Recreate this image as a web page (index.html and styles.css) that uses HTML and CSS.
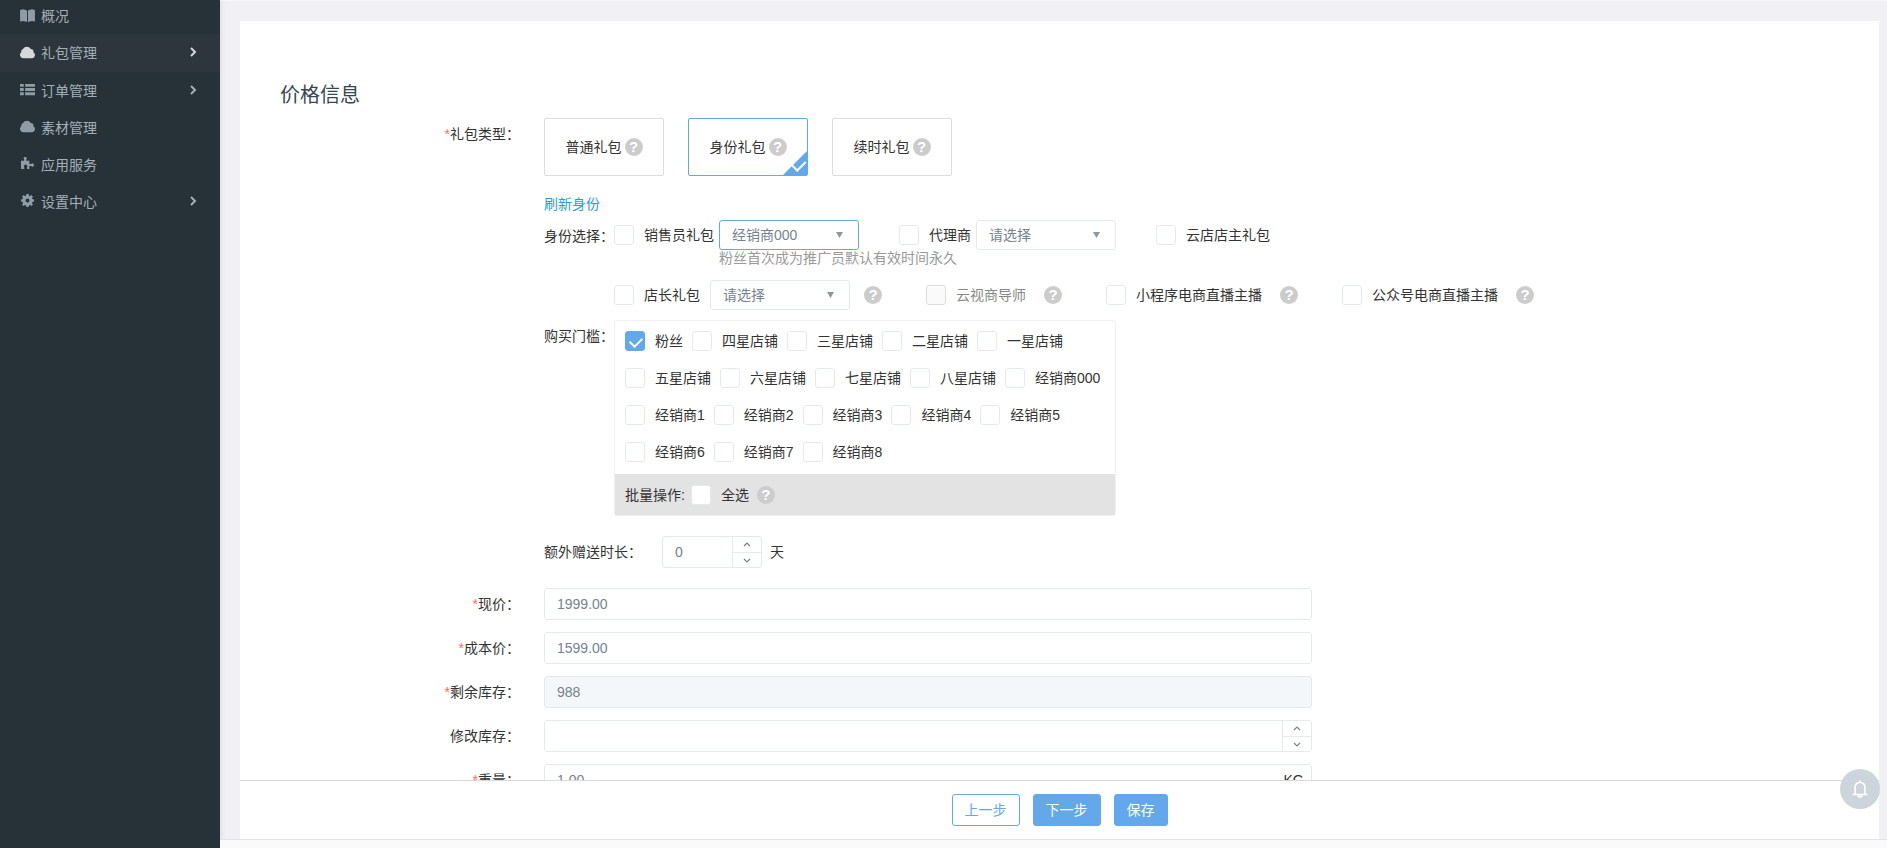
FILE: index.html
```
<!DOCTYPE html>
<html lang="zh-CN">
<head>
<meta charset="utf-8">
<title>价格信息</title>
<link rel="stylesheet" href="styles.css">
</head>
<body>
<svg class="sprite" aria-hidden="true">
  <symbol id="book" viewBox="0 0 16 14"><path d="M0 1 3.500.2 7.500 1.600V14L3.500 13 0 13.500zM16 1 12.500.2 8.500 1.600V14l4-1 3.500.5z"/></symbol>
  <symbol id="cloud" viewBox="0 0 16 12"><path d="M3.500 12A3.500 3.500 0 0 1 1.300 5.800 3.400 3.400 0 0 1 3.200 2.200 5 5 0 0 1 11.500 2.200 3.300 3.300 0 0 1 14.400 5.900 3.300 3.300 0 0 1 13 12z"/></symbol>
  <symbol id="list" viewBox="0 0 16 12"><path d="M0 0h4v3H0zM5.500 0H16v3H5.500zM0 4.500h4v3H0zM5.500 4.500H16v3H5.500zM0 9h4v3H0zM5.500 9H16v3H5.500z"/></symbol>
  <symbol id="puzzle" viewBox="0 0 16 14"><path d="M1 4h3.300V2.400a1.600 1.600 0 1 1 2.400 0V4H10v3.500h2a1.700 1.700 0 1 1 0 2.300h-2V13H7.500v-2a1.800 1.800 0 1 0-3 0v2H1z"/></symbol>
  <symbol id="cog" viewBox="0 0 14 14"><path fill-rule="evenodd" d="M5.800 0h2.400l.4 1.900 1 .4L11.200 1.200l1.700 1.700-1.100 1.600.4 1 1.800.4v2.300l-1.800.4-.4 1 1.100 1.600-1.700 1.700-1.600-1.100-1 .4L8.200 14H5.800l-.4-1.800-1-.4-1.600 1.100-1.700-1.700 1.100-1.600-.4-1L0 8.200V5.900l1.800-.4.4-1L1.100 2.900l1.700-1.700 1.600 1.100 1-.4zM7 4.900a2.100 2.100 0 1 0 0 4.200 2.100 2.100 0 0 0 0-4.200z"/></symbol>
  <symbol id="chevron" viewBox="0 0 7 10"><path class="line bold" d="m1 1 4 4-4 4"/></symbol>
  <symbol id="up" viewBox="0 0 8 5"><path class="line" d="M1 4 4 1l3 3"/></symbol>
  <symbol id="down" viewBox="0 0 8 5"><path class="line" d="m1 1 3 3 3-3"/></symbol>
  <symbol id="caret" viewBox="0 0 7 6"><path d="M0 0h7L3.500 6z"/></symbol>
  <symbol id="bell" viewBox="0 0 18 18"><path class="line bell-line" d="M1.500 14.500h15M4 14.500V8c0-4 1.800-5.500 5-5.500s5 1.500 5 5.500v6.500"/><path d="M8 .5h2v2H8zM6 15.500h6c-.4 3-5.600 3-6 0z"/></symbol>
</svg>

<aside class="sidebar">
  <nav class="menu">
    <a class="menu-item" href="#"><svg class="menu-icon"><use href="#book"/></svg>概况</a>
    <a class="menu-item active" href="#"><svg class="menu-icon"><use href="#cloud"/></svg>礼包管理<svg class="arrow"><use href="#chevron"/></svg></a>
    <a class="menu-item" href="#"><svg class="menu-icon"><use href="#list"/></svg>订单管理<svg class="arrow"><use href="#chevron"/></svg></a>
    <a class="menu-item" href="#"><svg class="menu-icon"><use href="#cloud"/></svg>素材管理</a>
    <a class="menu-item" href="#"><svg class="menu-icon"><use href="#puzzle"/></svg>应用服务</a>
    <a class="menu-item" href="#"><svg class="menu-icon"><use href="#cog"/></svg>设置中心<svg class="arrow"><use href="#chevron"/></svg></a>
  </nav>
</aside>

<div class="page">
  <main class="content">
    <form class="panel">
      <h2 class="title">价格信息</h2>

      <div class="row">
        <span class="label top-label"><i>*</i>礼包类型：</span>
        <div class="stack">
          <div class="cards">
            <button type="button" class="card">普通礼包<span class="help">?</span></button>
            <button type="button" class="card selected">身份礼包<span class="help">?</span></button>
            <button type="button" class="card">续时礼包<span class="help">?</span></button>
          </div>
          <a class="refresh" href="#">刷新身份</a>

          <div class="group">
            <span class="group-label">身份选择：</span>
            <div class="identities">
              <div class="identity-line first">
                <div class="identity"><label class="check"><input type="checkbox">销售员礼包</label>
                  <div class="select focus"><select aria-label="销售员礼包"><option>经销商000</option></select><svg><use href="#caret"/></svg><p class="hint">粉丝首次成为推广员默认有效时间永久</p></div></div>
                <div class="identity"><label class="check"><input type="checkbox">代理商</label>
                  <div class="select"><select aria-label="代理商"><option>请选择</option></select><svg><use href="#caret"/></svg></div></div>
                <div class="identity"><label class="check"><input type="checkbox">云店店主礼包</label></div>
              </div>
              <div class="identity-line second">
                <div class="identity with-select"><label class="check"><input type="checkbox">店长礼包</label>
                  <div class="select"><select aria-label="店长礼包"><option>请选择</option></select><svg><use href="#caret"/></svg></div><span class="help">?</span></div>
                <div class="identity"><label class="check disabled"><input type="checkbox" disabled>云视商导师</label><span class="help">?</span></div>
                <div class="identity"><label class="check"><input type="checkbox">小程序电商直播主播</label><span class="help">?</span></div>
                <div class="identity"><label class="check"><input type="checkbox">公众号电商直播主播</label><span class="help">?</span></div>
              </div>
            </div>
          </div>

          <div class="group">
            <span class="group-label">购买门槛：</span>
            <div class="threshold">
              <div class="levels">
                <label class="check"><input type="checkbox" checked>粉丝</label>
                <label class="check"><input type="checkbox">四星店铺</label>
                <label class="check"><input type="checkbox">三星店铺</label>
                <label class="check"><input type="checkbox">二星店铺</label>
                <label class="check"><input type="checkbox">一星店铺</label>
                <label class="check"><input type="checkbox">五星店铺</label>
                <label class="check"><input type="checkbox">六星店铺</label>
                <label class="check"><input type="checkbox">七星店铺</label>
                <label class="check"><input type="checkbox">八星店铺</label>
                <label class="check"><input type="checkbox">经销商000</label>
                <label class="check"><input type="checkbox">经销商1</label>
                <label class="check"><input type="checkbox">经销商2</label>
                <label class="check"><input type="checkbox">经销商3</label>
                <label class="check"><input type="checkbox">经销商4</label>
                <label class="check"><input type="checkbox">经销商5</label>
                <label class="check"><input type="checkbox">经销商6</label>
                <label class="check"><input type="checkbox">经销商7</label>
                <label class="check"><input type="checkbox">经销商8</label>
              </div>
              <div class="batch"><span>批量操作:</span><label class="check"><input type="checkbox">全选</label><span class="help">?</span></div>
            </div>
          </div>

          <div class="duration">
            <label for="days">额外赠送时长：</label>
            <div class="field small">
              <input id="days" type="text" value="0">
              <div class="steps"><button type="button" aria-label="增加"><svg><use href="#up"/></svg></button><button type="button" aria-label="减少"><svg><use href="#down"/></svg></button></div>
            </div>
            <span>天</span>
          </div>
        </div>
      </div>

      <div class="row"><label class="label" for="price"><i>*</i>现价：</label><div class="field"><input id="price" type="text" value="1999.00"></div></div>
      <div class="row"><label class="label" for="cost"><i>*</i>成本价：</label><div class="field"><input id="cost" type="text" value="1599.00"></div></div>
      <div class="row"><label class="label" for="stock"><i>*</i>剩余库存：</label><div class="field off"><input id="stock" type="text" value="988" disabled></div></div>
      <div class="row"><label class="label" for="change">修改库存：</label><div class="field">
        <input id="change" type="text">
        <div class="steps"><button type="button" aria-label="增加"><svg><use href="#up"/></svg></button><button type="button" aria-label="减少"><svg><use href="#down"/></svg></button></div>
      </div></div>
      <div class="row"><label class="label" for="weight"><i>*</i>重量：</label><div class="field"><input id="weight" type="text" value="1.00"><span class="unit">KG</span></div></div>
    </form>
    <div class="actions">
      <button type="button" class="btn plain">上一步</button>
      <button type="button" class="btn">下一步</button>
      <button type="button" class="btn">保存</button>
    </div>
  </main>
  <footer class="footer"></footer>
</div>
<button type="button" class="bell" aria-label="通知"><svg><use href="#bell"/></svg></button>
</body>
</html>
```

FILE: styles.css
```
* { box-sizing: border-box; }

body {
  display: flex;
  height: 100vh;
  margin: 0;
  overflow: hidden;
  background: #f0f0f5;
  color: #333;
  font: 14px/20px "Liberation Sans", "Noto Sans CJK SC", sans-serif;
}

button, input, select { font: inherit; color: inherit; }
button { cursor: pointer; }
svg { fill: currentColor; }
.sprite { display: none; }
.line { fill: none; stroke: currentColor; stroke-width: 1.2; }
.line.bold { stroke-width: 2; }
.bell-line { stroke-width: 1.6; }

/* Sidebar */
.sidebar {
  flex: 0 0 220px;
  background: #273238;
  box-shadow: 0 0 6px rgba(0, 0, 0, .12);
}
.menu-item {
  display: flex;
  align-items: center;
  height: 37px;
  padding: 0 23px 0 20px;
  color: #a3afb7;
  text-decoration: none;
}
.menu-item:first-child { height: 34px; padding-bottom: 2px; }
.menu-item.active { height: 38px; background: #2c363c; }
.menu-icon { width: 15px; height: 13px; margin: 0 6px 2px 0; color: #8f9ca4; }
.active .menu-icon, .active .arrow { color: #d5d9db; }
.arrow { width: 7px; height: 10px; margin: 0 0 2px auto; }

/* Page */
.page {
  display: flex;
  flex: 1;
  flex-direction: column;
  min-width: 0;
  border-top: 1px solid #f8f8f8;
}
.content {
  display: flex;
  flex: 1;
  flex-direction: column;
  min-height: 0;
  padding: 20px 8px 0 20px;
}
.panel {
  flex: 1;
  min-height: 0;
  padding-top: 61px;
  overflow: hidden;
  background: #fff;
}
.title {
  margin: 0 0 10px 40px;
  color: #37474f;
  font-size: 20px;
  font-weight: 400;
  line-height: 26px;
}
.row {
  display: grid;
  grid-template-columns: 280px minmax(0, 1fr);
  column-gap: 24px;
  margin-bottom: 12px;
}
.label { line-height: 32px; text-align: right; }
.label i { color: #f56c6c; font-style: normal; }

.cards { display: flex; gap: 24px; margin-bottom: 18px; }
.card {
  position: relative;
  display: flex;
  align-items: center;
  justify-content: center;
  gap: 3px;
  width: 120px;
  height: 58px;
  padding: 0;
  border: 1px solid #ddd;
  border-radius: 2px;
  background: #fff;
}
.card.selected { border-color: #62a8ea; }
.card.selected::before {
  position: absolute;
  right: 0;
  bottom: 0;
  border: 12px solid #62a8ea;
  border-top-color: transparent;
  border-left-color: transparent;
  content: "";
}
.card.selected::after {
  position: absolute;
  right: 4px;
  bottom: 4px;
  width: 6px;
  height: 11px;
  border: solid #fff;
  border-width: 0 2px 2px 0;
  transform: rotate(45deg);
  content: "";
}
.help {
  flex: none;
  width: 18px;
  height: 18px;
  border-radius: 50%;
  background: #ccc;
  color: #fff;
  font-size: 15px;
  font-weight: 700;
  line-height: 18px;
  text-align: center;
}
.refresh {
  display: block;
  width: max-content;
  margin-bottom: 6px;
  color: #1ba0e1;
  text-decoration: none;
}

/* Identity and threshold */
.group { display: flex; }
.group-label { flex: 0 0 70px; line-height: 32px; }
.check { display: flex; align-items: center; gap: 10px; white-space: nowrap; }
.check input {
  position: relative;
  width: 20px;
  height: 20px;
  margin: 0;
  border: 1px solid #e4eaec;
  border-radius: 3px;
  background: #fff;
  appearance: none;
}
.check input:checked { border-color: #62a8ea; background: #62a8ea; }
.check input:checked::after {
  position: absolute;
  top: 3px;
  left: 6px;
  width: 6px;
  height: 10px;
  border: solid #fff;
  border-width: 0 2px 2px 0;
  transform: rotate(45deg);
  content: "";
}
.check.disabled { color: #888; }
.check input:disabled { border-color: #ddd; background: #fafafa; }
.identity-line { display: flex; height: 30px; }
.identity-line.first { gap: 40px; margin-bottom: 30px; }
.identity-line.second { gap: 44px; margin-bottom: 10px; }
.identity { display: flex; align-items: center; gap: 5px; }
.second .identity { gap: 18px; }
.second .with-select { gap: 10px; }
.with-select .help { margin-left: 4px; }
.select { position: relative; width: 140px; height: 30px; }
.select select {
  width: 100%;
  height: 30px;
  padding: 0 12px;
  border: 1px solid #e4eaec;
  border-radius: 3px;
  background: #fff;
  color: #76838f;
  appearance: none;
}
.select.focus select { border-color: #62a8ea; }
.select svg {
  position: absolute;
  top: 12px;
  right: 16px;
  width: 7px;
  height: 6px;
  color: #8c979f;
  pointer-events: none;
}
.hint {
  margin: 0;
  color: #999;
  line-height: 16px;
  white-space: nowrap;
}
.threshold {
  flex: 0 1 502px;
  border: 1px solid #f0f0f0;
  border-radius: 3px;
}
.levels { display: flex; flex-wrap: wrap; gap: 17px 9px; padding: 10px 10px 12px; }
.batch {
  display: flex;
  align-items: center;
  gap: 6px;
  height: 41px;
  padding: 0 10px;
  background: #e3e3e3;
}
.batch .help { margin-left: 2px; }

/* Fields */
.duration { display: flex; align-items: center; gap: 8px; margin: 20px 0 8px; }
.duration label { width: 110px; }
.field {
  display: flex;
  width: 57.5%;
  height: 32px;
  border: 1px solid #e4eaec;
  border-radius: 3px;
  background: #fff;
}
.field.small { width: 100px; }
.field.off { background: #f3f7fa; }
.field input {
  flex: 1;
  min-width: 0;
  padding: 0 12px;
  border: 0;
  background: transparent;
  color: #76838f;
}
.steps {
  display: grid;
  flex: 0 0 29px;
  grid-template-rows: 1fr 1fr;
  border-left: 1px solid #e4eaec;
}
.steps button {
  display: grid;
  place-items: center;
  padding: 0;
  border: 0;
  background: none;
  color: #76838f;
}
.steps button + button { border-top: 1px solid #e4eaec; }
.steps svg { width: 8px; height: 5px; }
.unit { padding-right: 7px; line-height: 30px; }

/* Action bar */
.actions {
  display: flex;
  flex: none;
  justify-content: center;
  gap: 13px;
  padding: 13px 0;
  border-top: 1px solid #d9d9d9;
  background: #fff;
}
.btn {
  height: 32px;
  padding: 0 12px;
  border: 1px solid #62a8ea;
  border-radius: 3px;
  background: #62a8ea;
  color: #fff;
}
.btn.plain { background: #fff; color: #62a8ea; }
.footer { flex: 0 0 9px; border-top: 1px solid #e4e4e4; background: #fafafa; }
.bell {
  position: fixed;
  right: 7px;
  bottom: 39px;
  display: grid;
  place-items: center;
  width: 40px;
  height: 40px;
  padding: 0;
  border: 0;
  border-radius: 50%;
  background: #ccd5db;
  color: #fff;
}
.bell svg { width: 18px; height: 18px; }
```
